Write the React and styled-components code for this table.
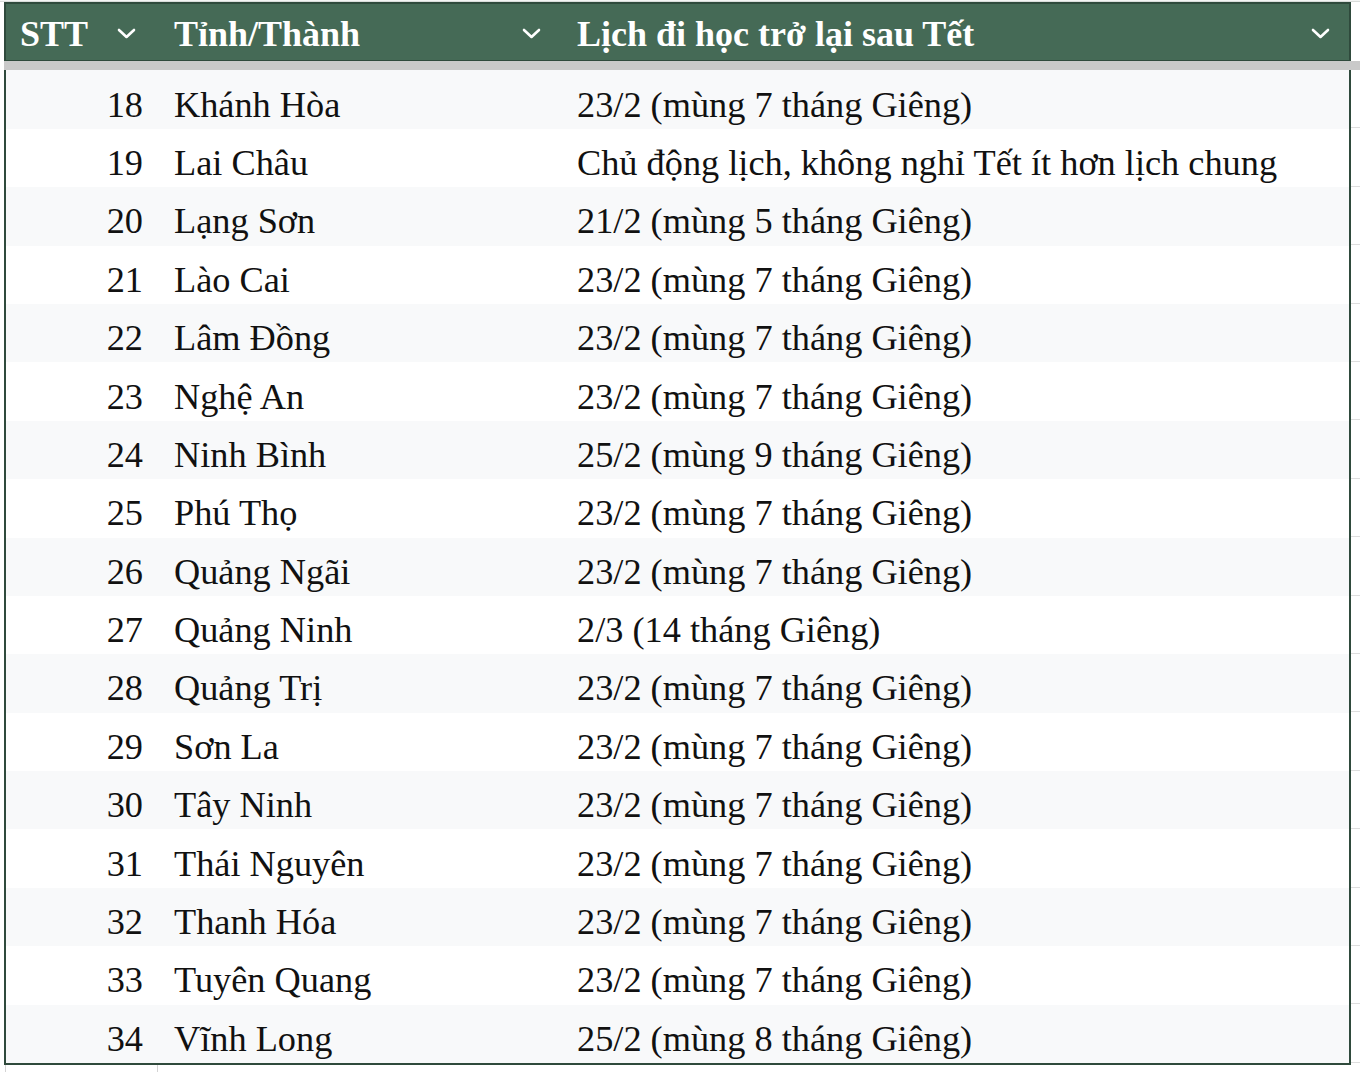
import React from 'react';
import styled, { createGlobalStyle } from 'styled-components';

const GlobalStyle = createGlobalStyle`
  html, body {
    margin: 0;
    padding: 0;
    background: #ffffff;
  }
  body {
    font-family: "Liberation Serif", "Times New Roman", serif;
    color: #111;
  }
`;

const ROW_H = 58.4;
const COLS = '152px 403px 1fr';

const rows = [
  ['18', 'Khánh Hòa', '23/2 (mùng 7 tháng Giêng)'],
  ['19', 'Lai Châu', 'Chủ động lịch, không nghỉ Tết ít hơn lịch chung'],
  ['20', 'Lạng Sơn', '21/2 (mùng 5 tháng Giêng)'],
  ['21', 'Lào Cai', '23/2 (mùng 7 tháng Giêng)'],
  ['22', 'Lâm Đồng', '23/2 (mùng 7 tháng Giêng)'],
  ['23', 'Nghệ An', '23/2 (mùng 7 tháng Giêng)'],
  ['24', 'Ninh Bình', '25/2 (mùng 9 tháng Giêng)'],
  ['25', 'Phú Thọ', '23/2 (mùng 7 tháng Giêng)'],
  ['26', 'Quảng Ngãi', '23/2 (mùng 7 tháng Giêng)'],
  ['27', 'Quảng Ninh', '2/3 (14 tháng Giêng)'],
  ['28', 'Quảng Trị', '23/2 (mùng 7 tháng Giêng)'],
  ['29', 'Sơn La', '23/2 (mùng 7 tháng Giêng)'],
  ['30', 'Tây Ninh', '23/2 (mùng 7 tháng Giêng)'],
  ['31', 'Thái Nguyên', '23/2 (mùng 7 tháng Giêng)'],
  ['32', 'Thanh Hóa', '23/2 (mùng 7 tháng Giêng)'],
  ['33', 'Tuyên Quang', '23/2 (mùng 7 tháng Giêng)'],
  ['34', 'Vĩnh Long', '25/2 (mùng 8 tháng Giêng)'],
];

const Page = styled.div`
  width: 1360px;
  height: 1072px;
  overflow: hidden;
  display: flex;
  flex-direction: column;
`;

const TopStrip = styled.div`
  height: 3px;
  background: #f4f5f4;
  border-bottom: 1px solid #d9dcda;
  box-sizing: border-box;
`;

const Main = styled.div`
  display: flex;
  align-items: flex-start;
`;

const Frame = styled.div`
  margin-left: 4px;
  width: 1347px;
  flex-shrink: 0;
`;

const Gutter = styled.div`
  flex: 1;
  margin-top: 68px;
  height: ${ROW_H * 17}px;
  background: repeating-linear-gradient(
    to bottom,
    transparent 0,
    transparent ${ROW_H - 1}px,
    #dedede ${ROW_H - 1}px,
    #dedede ${ROW_H}px
  );
`;

const Header = styled.div`
  display: grid;
  grid-template-columns: ${COLS};
  height: 59px;
  background: #456a56;
  border: 2px solid #2f4a3c;
  border-bottom-width: 1px;
  box-sizing: border-box;
`;

const HeadCell = styled.div`
  display: flex;
  align-items: center;
  justify-content: space-between;
  padding: 3px ${(p) => p.$right}px 0 ${(p) => p.$left}px;
  color: #ffffff;
  font-weight: 700;
  font-size: 36px;
  white-space: nowrap;
`;

const FreezeBar = styled.div`
  height: 9px;
  background: #c9c9c9;
  margin-right: -20px;
`;

const Body = styled.div`
  display: grid;
  grid-template-columns: ${COLS};
  grid-auto-rows: ${ROW_H}px;
  border: 2px solid #2f4a3c;
  border-top: none;
`;

const Cell = styled.div`
  display: flex;
  align-items: center;
  justify-content: ${(p) => (p.$num ? 'flex-end' : 'flex-start')};
  padding: 10px ${(p) => (p.$num ? 15 : 0)}px 0 ${(p) => (p.$num ? 0 : 16)}px;
  background: ${(p) => (p.$alt ? '#f8f9fa' : '#ffffff')};
  font-size: 36.3px;
  color: #111;
  white-space: nowrap;
  overflow: hidden;
`;

const BottomStrip = styled.div`
  display: flex;
  height: 10px;
`;

const GridLine = styled.div`
  width: ${(p) => p.$w}px;
  border-right: 1px solid #d4d4d4;
  box-sizing: border-box;
`;

const Chevron = () => (
  <svg width="19" height="11" viewBox="0 0 19 11" fill="none">
    <path d="M2 2 L9.5 9 L17 2" stroke="#ffffff" strokeWidth="2.6" strokeLinecap="round" strokeLinejoin="round" />
  </svg>
);

export default function App() {
  return (
    <Page>
      <GlobalStyle />
      <TopStrip />
      <Main>
        <Frame>
          <Header>
            <HeadCell $left={14} $right={22}>
              <span>STT</span>
              <Chevron />
            </HeadCell>
            <HeadCell $left={16} $right={20}>
              <span>Tỉnh/Thành</span>
              <Chevron />
            </HeadCell>
            <HeadCell $left={16} $right={19}>
              <span>Lịch đi học trở lại sau Tết</span>
              <Chevron />
            </HeadCell>
          </Header>
          <FreezeBar />
          <Body>
            {rows.map(([n, name, date], i) => (
              <React.Fragment key={n}>
                <Cell $num $alt={i % 2 === 0}>{n}</Cell>
                <Cell $alt={i % 2 === 0}>{name}</Cell>
                <Cell $alt={i % 2 === 0}>{date}</Cell>
              </React.Fragment>
            ))}
          </Body>
        </Frame>
        <Gutter />
      </Main>
      <BottomStrip>
        <GridLine $w={6} />
        <GridLine $w={152} />
      </BottomStrip>
    </Page>
  );
}
